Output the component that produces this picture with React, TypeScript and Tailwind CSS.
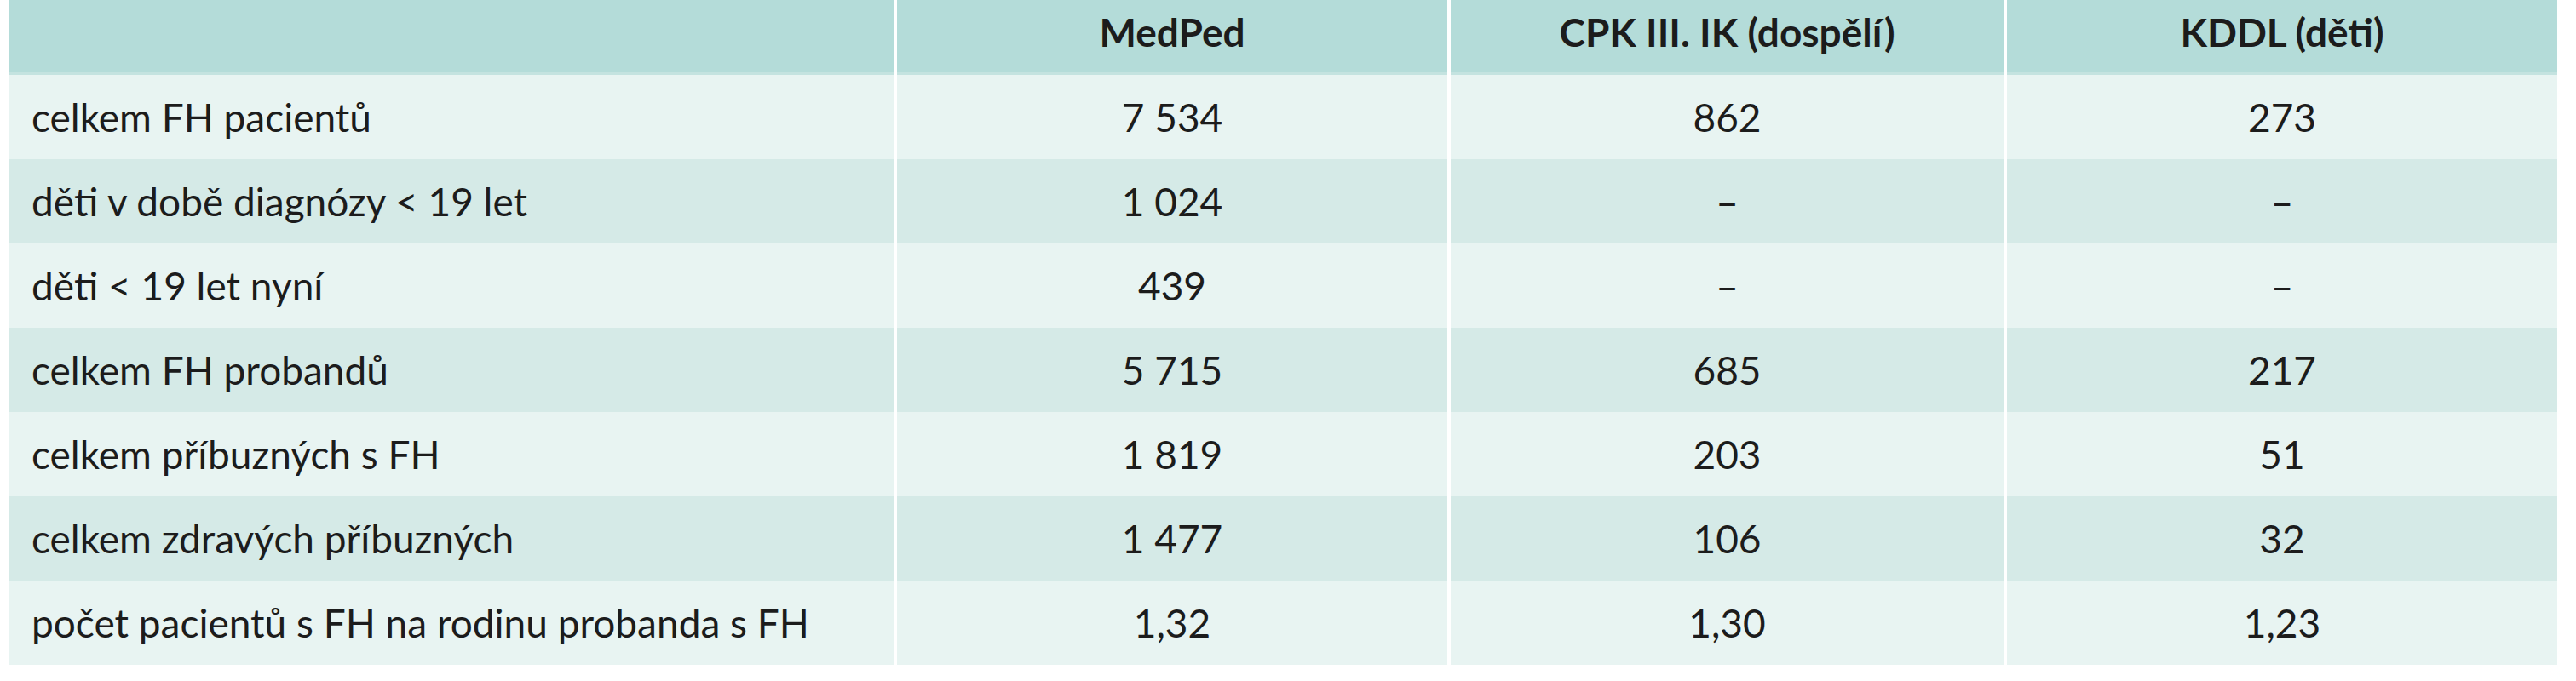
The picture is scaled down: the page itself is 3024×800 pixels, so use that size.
const header = ['', 'MedPed', 'CPK III. IK (dospělí)', 'KDDL (děti)']

const rows: string[][] = [
  ['celkem FH pacientů', '7 534', '862', '273'],
  ['děti v době diagnózy < 19 let', '1 024', '–', '–'],
  ['děti < 19 let nyní', '439', '–', '–'],
  ['celkem FH probandů', '5 715', '685', '217'],
  ['celkem příbuzných s FH', '1 819', '203', '51'],
  ['celkem zdravých příbuzných', '1 477', '106', '32'],
  ['počet pacientů s FH na rodinu probanda s FH', '1,32', '1,30', '1,23'],
]

export default function App() {
  return (
    <div className="w-[3024px] h-[800px] bg-white pl-[11px] text-[#1c1c1c] font-['Lato','Liberation_Sans',sans-serif]">
      <div className="w-[2991px] grid grid-cols-[1038px_646px_649px_646px] gap-x-[4px]">
        {header.map((h, i) => (
          <div
            key={i}
            className="h-[88px] bg-[#b4dcd9] border-b-4 border-[#c4e3e0] flex items-center justify-center pb-[10px] text-[46px] font-bold"
          >
            {h}
          </div>
        ))}
        {rows.map((row, r) =>
          row.map((cell, c) => (
            <div
              key={`${r}-${c}`}
              className={`h-[99px] flex items-center text-[46px] ${c === 0 ? 'pl-[26px]' : 'justify-center'} ${r % 2 === 0 ? 'bg-[#e8f4f2]' : 'bg-[#d5eae7]'}`}
            >
              {cell}
            </div>
          ))
        )}
      </div>
    </div>
  )
}
